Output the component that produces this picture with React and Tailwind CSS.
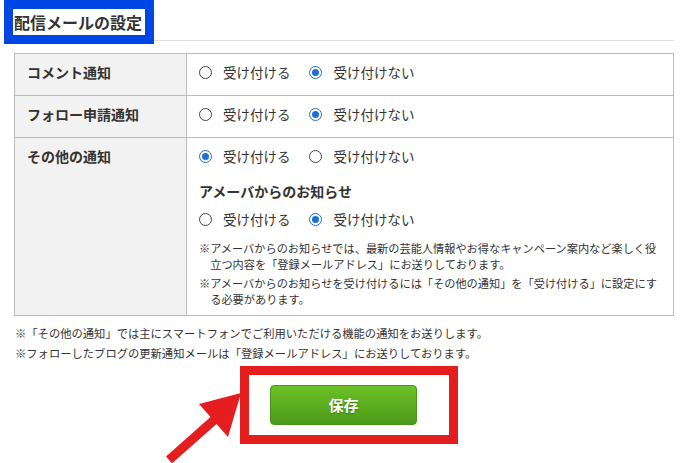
import React from "react";

const Radio = ({ checked }) => (
  <span
    className={
      "flex h-[13px] w-[13px] shrink-0 items-center justify-center rounded-full border bg-white " +
      (checked ? "border-[#1f6fd6]" : "border-[#444]")
    }
  >
    {checked && <span className="h-[7px] w-[7px] rounded-full bg-[#1f6fd6]" />}
  </span>
);

const RadioRow = ({ accept }) => (
  <div className="flex h-[20px] items-center text-[13.5px] text-[#333]">
    <Radio checked={accept} />
    <span className="ml-[11px]">受け付ける</span>
    <span className="ml-[18px]">
      <Radio checked={!accept} />
    </span>
    <span className="ml-[12px]">受け付けない</span>
  </div>
);

const rows = [
  { label: "コメント通知", accept: false },
  { label: "フォロー申請通知", accept: false },
];

export default function App() {
  return (
    <div
      className="relative h-[463px] w-[690px] overflow-hidden bg-white text-[#333]"
      style={{ fontFamily: '"Noto Sans CJK JP", "Noto Sans", sans-serif' }}
    >
      <div className="ml-[4px] mr-[16px] flex h-[41px] border-b border-[#dddddd]">
        <div className="relative z-10 h-[44px] w-[150px] shrink-0 border-[9px] border-[#0046e4] bg-white px-[1px]">
          <h2 className="text-[16px] font-bold leading-[26px] text-[#333]">配信メールの設定</h2>
        </div>
      </div>

      <table className="ml-[14px] mt-[12px] w-[660px] border-collapse text-[#333]">
        <tbody>
          {rows.map((r) => (
            <tr key={r.label} className="h-[42px]">
              <th className="w-[172px] border border-[#bbbbbb] bg-[#f2f2f2] pl-[12px] pt-[8px] text-left align-top text-[14px] font-bold leading-[20px]">
                {r.label}
              </th>
              <td className="border border-[#bbbbbb] pl-[12px] pt-[8px] align-top">
                <RadioRow accept={r.accept} />
              </td>
            </tr>
          ))}
          <tr>
            <th className="w-[172px] border border-[#bbbbbb] bg-[#f2f2f2] pl-[12px] pt-[8px] text-left align-top text-[14px] font-bold leading-[20px]">
              その他の通知
            </th>
            <td className="border border-[#bbbbbb] pb-[8px] pl-[12px] pr-[12px] pt-[8px] align-top">
              <RadioRow accept={true} />
              <p className="mt-[15px] text-[14px] font-bold leading-[20px]">アメーバからのお知らせ</p>
              <div className="mt-[8px]">
                <RadioRow accept={false} />
              </div>
              <p className="mt-[11px] pl-[1em] text-[11.2px] leading-[16px] [text-indent:-1em]">
                ※アメーバからのお知らせでは、最新の芸能人情報やお得なキャンペーン案内など楽しく役立つ内容を「登録メールアドレス」にお送りしております。
              </p>
              <p className="mt-[3px] pl-[1em] text-[11.2px] leading-[16px] [text-indent:-1em]">
                ※アメーバからのお知らせを受け付けるには「その他の通知」を「受け付ける」に設定にする必要があります。
              </p>
            </td>
          </tr>
        </tbody>
      </table>

      <div className="ml-[15px] mt-[7px] text-[11.3px] leading-[20px]">
        <p>※「その他の通知」では主にスマートフォンでご利用いただける機能の通知をお送りします。</p>
        <p>※フォローしたブログの更新通知メールは「登録メールアドレス」にお送りしております。</p>
      </div>

      <div className="ml-[240px] mt-[3px] h-[78px] w-[218px] border-[9px] border-[#e41e1e] bg-white pl-[21px] pt-[10px]">
        <button className="flex h-[40px] w-[147px] items-center justify-center rounded-[4px] border border-[#4a9518] bg-gradient-to-b from-[#6cc126] to-[#4c9a19] text-[15px] font-bold text-white [text-shadow:0_1px_1px_rgba(0,0,0,0.3)]">
          保存
        </button>
      </div>

      <svg className="absolute left-0 top-0" width="690" height="463" viewBox="0 0 690 463">
        <polygon
          points="241,393 199,404 210.5,417 166,456.6 172,463.4 216.5,424 228,437"
          fill="#e41e1e"
        />
      </svg>
    </div>
  );
}
